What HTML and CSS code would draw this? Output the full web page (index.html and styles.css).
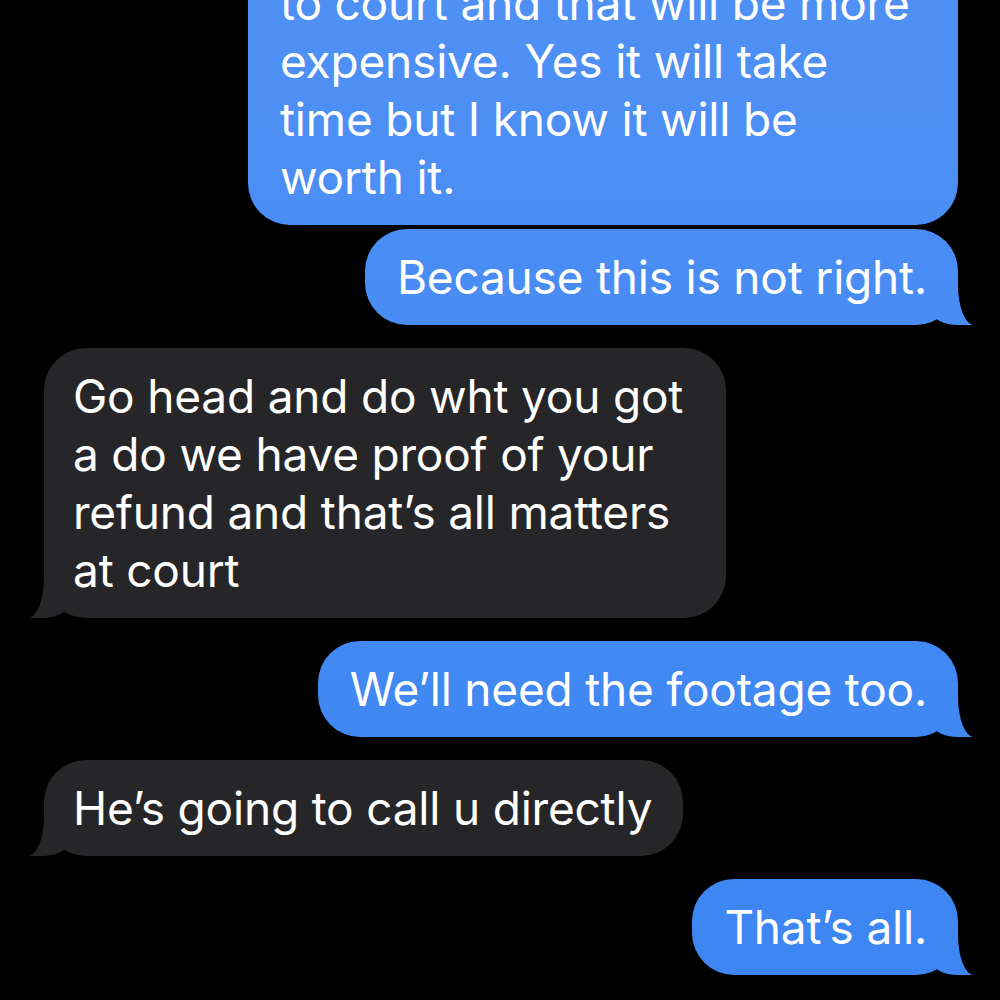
FILE: index.html
```html
<!DOCTYPE html>
<html lang="en">
<head>
    <meta charset="UTF-8">
    <meta name="viewport" content="width=device-width, initial-scale=1.0">
    <title>Messages</title>
    <link rel="stylesheet" href="styles.css">
</head>
<body>
    <!-- Conversation (scrolled, top bubble cut off) -->
    <div class="thread">
        <div class="bubble sent wide first">
            to court and that will be more<br>
            expensive. Yes it will take<br>
            time but I know it will be<br>
            worth it.
        </div>
        <div class="bubble sent tail same">Because this is not right.</div>

        <div class="bubble received tail wide">
            Go head and do wht you got<br>
            a do we have proof of your<br>
            refund and that’s all matters<br>
            at court
        </div>

        <div class="bubble sent tail">We’ll need the footage too.</div>

        <div class="bubble received tail">He’s going to call u directly</div>

        <div class="bubble sent tail">That’s all.</div>
    </div>
</body>
</html>
```

FILE: styles.css
```css
* {
    margin: 0;
    padding: 0;
    box-sizing: border-box;
}

body {
    background: #000;
    font-family: Inter, "Noto Sans", Arial, sans-serif;
    color: #fff;
    overflow: hidden;
}

.thread {
    display: flex;
    flex-direction: column;
    padding: 0 42px 0 44px;
}

.bubble {
    position: relative;
    width: fit-content;
    padding: 19px 31px 19px 32px;
    border-radius: 42px;
    font-size: 46px;
    line-height: 58px;
    letter-spacing: -0.2px;
    margin-top: 23px;
}

/* blue gradient runs over the whole screen, like iOS */
.sent {
    align-self: flex-end;
    background: linear-gradient(180deg, #4f90f5 0%, #4289f3 60%, #3d85f1 100%) fixed;
}

.received {
    align-self: flex-start;
    padding-left: 29px;
    background: #262628;
}

.bubble.first {
    margin-top: -45px;
}

.bubble.same {
    margin-top: 4px;
}

.sent.wide {
    width: 710px;
}

.received.wide {
    width: 682px;
}

/* Tails */
.tail::before,
.tail::after {
    content: "";
    position: absolute;
    bottom: 0;
    height: 44px;
}

.sent.tail::before {
    right: -14px;
    width: 40px;
    background: linear-gradient(180deg, #4f90f5 0%, #4289f3 60%, #3d85f1 100%) fixed;
    border-bottom-left-radius: 26px 14px;
}

.sent.tail::after {
    right: -34px;
    width: 34px;
    background: #000;
    border-bottom-left-radius: 16px 40px;
}

.received.tail::before {
    left: -16px;
    width: 40px;
    background: #262628;
    border-bottom-right-radius: 26px 14px;
}

.received.tail::after {
    left: -34px;
    width: 34px;
    background: #000;
    border-bottom-right-radius: 16px 40px;
}
```
